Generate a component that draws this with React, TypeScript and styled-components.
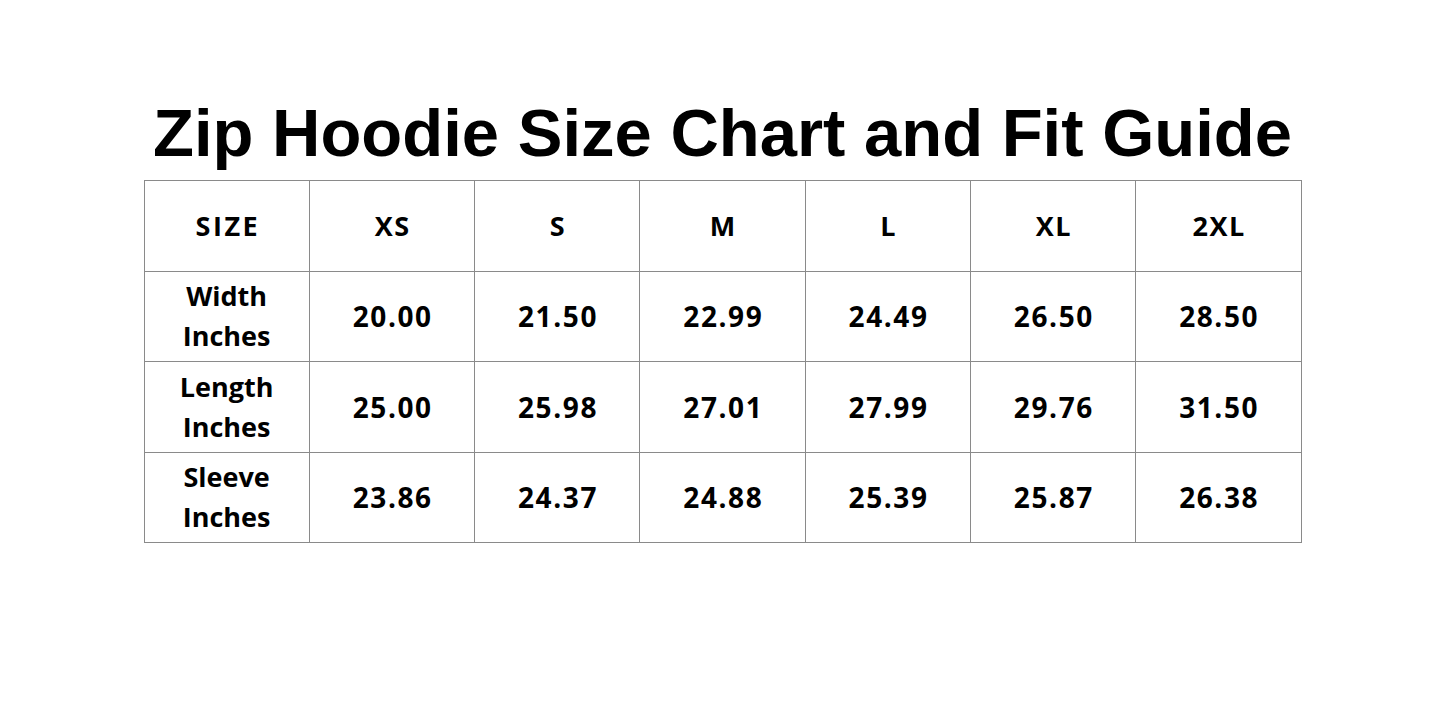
import React from "react";
import styled, { createGlobalStyle } from "styled-components";

const Global = createGlobalStyle`
  html, body { margin: 0; padding: 0; background: #ffffff; }
  body { font-family: "Open Sans", "Liberation Sans", sans-serif; color: #000; }
`;

const Page = styled.div`
  width: 1445px;
  height: 723px;
  display: flex;
  flex-direction: column;
  align-items: center;
  padding-top: 95px;
  box-sizing: border-box;
`;

const Title = styled.h1`
  margin: 0 0 9px 0;
  font-family: "Liberation Sans", "Arial", sans-serif;
  font-weight: 700;
  font-size: 67px;
  line-height: 76px;
  letter-spacing: 0px;
  color: #000;
`;

const Table = styled.table`
  border-collapse: collapse;
  table-layout: fixed;
  width: 1158px;
`;

const Cell = styled.td<{ $spread?: number; $size?: number }>`
  border: 1px solid #8a8a8a;
  height: 89.5px;
  padding: 0 0 0 ${(p) => p.$spread ?? 0}px;
  text-align: center;
  vertical-align: middle;
  font-family: "Open Sans", "Liberation Sans", sans-serif;
  font-weight: 700;
  font-size: ${(p) => p.$size ?? 27}px;
  line-height: 40px;
  letter-spacing: ${(p) => p.$spread ?? 0}px;
  color: #000;
`;

const sizes = ["XS", "S", "M", "L", "XL", "2XL"];
const rows = [
  { label: ["Width", "Inches"], values: ["20.00", "21.50", "22.99", "24.49", "26.50", "28.50"] },
  { label: ["Length", "Inches"], values: ["25.00", "25.98", "27.01", "27.99", "29.76", "31.50"] },
  { label: ["Sleeve", "Inches"], values: ["23.86", "24.37", "24.88", "25.39", "25.87", "26.38"] },
];

export default function App() {
  return (
    <>
      <Global />
      <Page>
        <Title>Zip Hoodie Size Chart and Fit Guide</Title>
        <Table>
          <tbody>
            <tr>
              <Cell $spread={2.5}>SIZE</Cell>
              {sizes.map((s) => (
                <Cell key={s} $spread={1.5}>{s}</Cell>
              ))}
            </tr>
            {rows.map((r) => (
              <tr key={r.label[0]}>
                <Cell>
                  {r.label[0]}
                  <br />
                  {r.label[1]}
                </Cell>
                {r.values.map((v, i) => (
                  <Cell key={i} $spread={1.6} $size={28}>{v}</Cell>
                ))}
              </tr>
            ))}
          </tbody>
        </Table>
      </Page>
    </>
  );
}
